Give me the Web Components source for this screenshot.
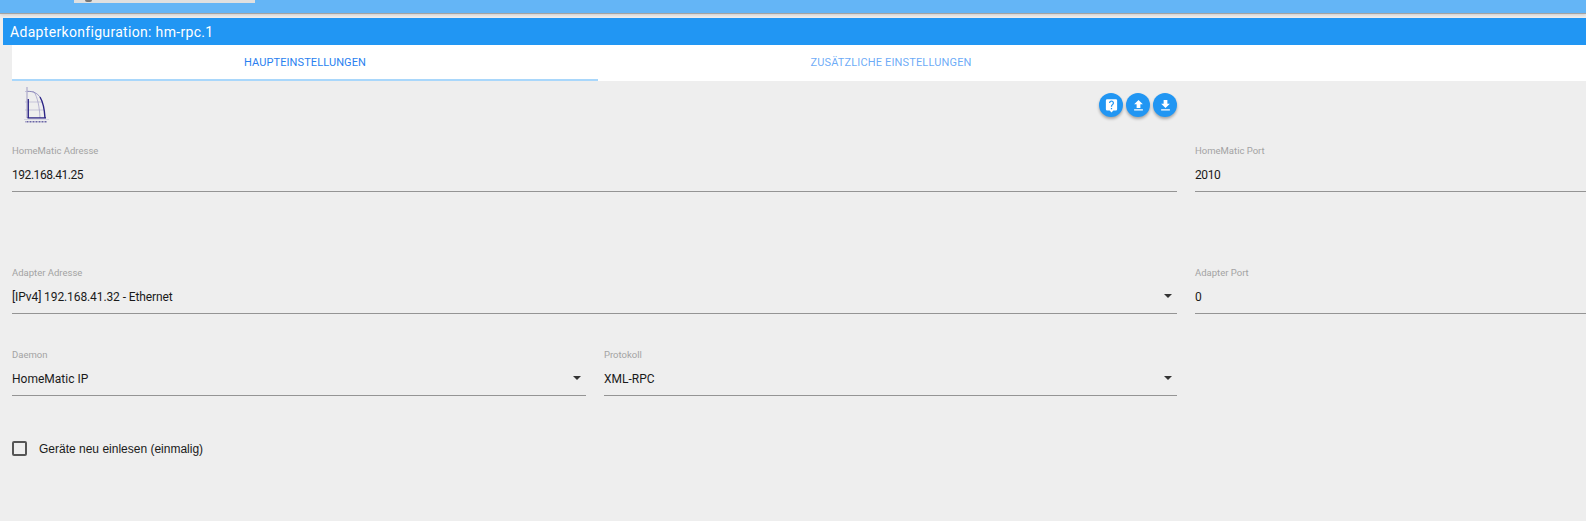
<!DOCTYPE html>
<html lang="de"><head><meta charset="utf-8"><style>
html,body{margin:0;padding:0;background:#eee;width:1586px;height:521px;overflow:hidden}
body{font-family:Roboto,"Liberation Sans",sans-serif}
</style></head><body>
<app-page></app-page>
<script>
const ICONS={
help:'<path d="M19 2H5a2 2 0 0 0-2 2v14a2 2 0 0 0 2 2h4l3 3 3-3h4a2 2 0 0 0 2-2V4a2 2 0 0 0-2-2zm-6 16h-2v-2h2v2zm2.07-7.75-.9.92C13.45 11.9 13 12.5 13 14h-2v-.5c0-1.1.45-2.1 1.17-2.83l1.24-1.26c.37-.36.59-.86.59-1.41 0-1.1-.9-2-2-2s-2 .9-2 2H8c0-2.21 1.79-4 4-4s4 1.79 4 4c0 .88-.36 1.68-.93 2.25z"/>',
up:'<path d="M9 16h6v-6h4l-7-7-7 7h4zm-4 2h14v2H5z"/>',
down:'<path d="M19 9h-4V3H9v6H5l7 7 7-7zM5 18v2h14v-2H5z"/>'};
function def(name,html){customElements.define(name,class extends HTMLElement{
 constructor(){super();this.attachShadow({mode:'open'}).innerHTML=html(this)}})}
def('top-bar',()=>`<style>:host{display:block;height:13px;background:#64b5f6;border-bottom:1px solid #a3a3a3;box-shadow:0 1px 3px rgba(0,0,0,.15)}
.tab{width:181px;height:3px;margin-left:74px;background:#e0e0e0;position:relative}
.g{position:absolute;left:11px;top:0;width:7px;height:2px;background:#777;border-radius:0 0 4px 4px}</style><div class="tab"><div class="g"></div></div>`);
def('title-bar',()=>`<style>:host{display:flex;align-items:center;height:27px;margin:4px 0 0 3px;padding-left:7px;background:#2196f3;color:#fff;font-size:14px;font-weight:400;letter-spacing:.32px}</style><slot></slot>`);
def('tab-item',e=>`<style>:host{display:flex;align-items:center;justify-content:center;width:586px;height:36px;font-size:11px;letter-spacing:${e.getAttribute('ls')};color:${e.hasAttribute('active')?'#2a7ff0':'rgba(33,130,243,.68)'};box-sizing:border-box;border-bottom:2px solid ${e.hasAttribute('active')?'#a9d7fb':'transparent'}}</style><slot></slot>`);
def('tab-bar',()=>`<style>:host{display:flex;height:36px;margin-left:12px;background:#fff}</style><slot></slot>`);
def('fab-btn',e=>`<style>:host{display:flex;align-items:center;justify-content:center;width:24px;height:24px;border-radius:50%;background:#2196f3;box-shadow:0 2px 3px rgba(0,0,0,.3)}svg{width:15px;height:15px;fill:#fff}</style><svg viewBox="0 0 24 24">${ICONS[e.getAttribute('icon')]}</svg>`);
def('hm-logo',()=>`<style>:host{display:block;width:30px;height:40px}svg{display:block}</style><svg width="30" height="40" viewBox="0 0 30 40" fill="none">
<path d="M5 2V33" stroke="#6b66a6" stroke-width=".6"/>
<path d="M3 6.500H12M3 17H20M3 25H22" stroke="#b4b2d0" stroke-width=".7"/>
<path d="M12 6.800C15.500 12 17.500 22 18 33" stroke="#9d99c4" stroke-width=".7"/>
<path d="M5.500 6.300C11 6.300 15 8 18 12" stroke="#7d78b2" stroke-width=".8"/>
<path d="M18 12C21 17 22.500 24 23 33" stroke="#2c2486" stroke-width="1.400"/>
<path d="M6.300 14V33" stroke="#2c2486" stroke-width="1.300"/>
<path d="M5.500 32.900H24" stroke="#2c2486" stroke-width="1.300"/>
<path d="M2 34.500H27" stroke="#c4c3da" stroke-width=".6"/>
<path d="M3.500 36.800H25" stroke="#6b66a6" stroke-width="1.500" stroke-dasharray="1 .5"/>
</svg>`);
def('form-field',e=>`<style>:host{display:block;box-sizing:border-box;height:48px;padding-top:1px;position:relative;border-bottom:1px solid #949494}
.l{font-size:9.5px;line-height:11px;color:#a3a3a3;height:11px}
.v{font-size:12px;line-height:14px;margin-top:12px;color:#1a1a1a;letter-spacing:${e.getAttribute('ls')||'0'}px}
.a{position:absolute;right:5px;top:28px;width:0;height:0;border:4px solid transparent;border-top-color:#333;border-bottom-width:0}</style>
<div class="l">${e.getAttribute('label')}</div><div class="v">${e.getAttribute('value')}</div>${e.hasAttribute('select')?'<div class="a"></div>':''}`);
def('check-row',()=>`<style>:host{display:flex;align-items:center;gap:12px;font:12px "Liberation Sans",Arial,sans-serif;color:#1a1a1a}
.b{width:11px;height:11px;border:2px solid #555;border-radius:2px;flex:none}</style><div class="b"></div><slot></slot>`);
def('settings-form',()=>`<style>:host{display:block;padding:0 0 0 12px}
.head{display:flex;height:63px;width:1165px;padding-top:4px;box-sizing:border-box}
.logo{margin-left:10px}
.btns{margin-left:auto;margin-top:8px;display:flex;gap:3px;height:24px}
.grid{display:grid;grid-template-columns:574px 573px 1fr;column-gap:18px}
.wide{grid-column:1/3}
.chk{margin-top:45px}</style>
<div class="head"><hm-logo class="logo"></hm-logo><div class="btns"><fab-btn icon="help"></fab-btn><fab-btn icon="up"></fab-btn><fab-btn icon="down"></fab-btn></div></div>
<div class="grid" style="margin-bottom:74px"><form-field class="wide" ls="-.45" label="HomeMatic Adresse" value="192.168.41.25"></form-field><form-field ls="-.4" label="HomeMatic Port" value="2010"></form-field></div>
<div class="grid" style="margin-bottom:34px"><form-field class="wide" ls="-.1" select label="Adapter Adresse" value="[IPv4] 192.168.41.32 - Ethernet"></form-field><form-field label="Adapter Port" value="0"></form-field></div>
<div class="grid"><form-field select label="Daemon" value="HomeMatic IP"></form-field><form-field select label="Protokoll" value="XML-RPC"></form-field></div>
<check-row class="chk">Geräte neu einlesen (einmalig)</check-row>`);
def('app-page',()=>`<style>:host{display:block;width:1586px;height:521px;background:#eee;overflow:hidden}</style>
<top-bar></top-bar><title-bar>Adapterkonfiguration: hm-rpc.1</title-bar>
<tab-bar><tab-item active ls=".1px">HAUPTEINSTELLUNGEN</tab-item><tab-item ls=".15px">ZUSÄTZLICHE EINSTELLUNGEN</tab-item></tab-bar>
<settings-form></settings-form>`);
</script></body></html>
